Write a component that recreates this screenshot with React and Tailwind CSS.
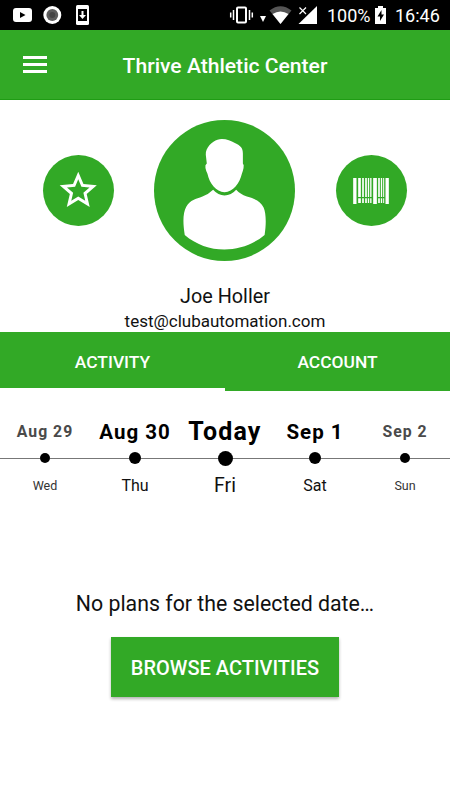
import { clsx } from 'clsx';

const days = [
  { date: 'Aug 29', day: 'Wed', size: 'sm' },
  { date: 'Aug 30', day: 'Thu', size: 'md' },
  { date: 'Today', day: 'Fri', size: 'lg' },
  { date: 'Sep 1', day: 'Sat', size: 'md' },
  { date: 'Sep 2', day: 'Sun', size: 'sm' },
];

const dateStyles = {
  sm: 'text-[15.8px] tracking-[1px] text-[#4a4a4a]',
  md: 'text-[20.5px] tracking-[1px] text-black',
  lg: 'text-[25px] tracking-[1.2px] text-black',
};

const dotStyles = {
  sm: 'size-[10px]',
  md: 'size-[12.5px]',
  lg: 'size-[15px]',
};

const dayStyles = {
  sm: 'text-[12.5px] text-[#333]',
  md: 'text-[16px]',
  lg: 'text-[19.5px]',
};

// x offset, width, height of each barcode stripe
const stripes = [
  [0, 10, 78], [15, 8, 75], [27, 5, 75], [36, 5, 75], [44, 4, 75], [51, 4, 75],
  [60, 11, 78], [75, 5, 75], [83, 4, 75], [90, 3, 75], [97, 10, 78],
];

function StatusBar() {
  return (
    <div className="flex h-[30px] items-center bg-black text-white">
      <svg className="ml-[12px] h-[30px] w-[80px]" viewBox="12 0 80 30">
        <rect x="13" y="8" width="19" height="14" rx="3" fill="#fff" />
        <path d="M20 12l5.5 3-5.5 3z" fill="#000" />
        <circle cx="52.3" cy="15" r="9" fill="#fff" />
        <circle cx="52.3" cy="15" r="5.9" fill="#5c5c5c" />
        <circle cx="52.3" cy="15" r="3" fill="#444" />
        <rect x="76" y="5" width="13" height="20" rx="1.5" fill="#fff" />
        <path d="M78 9h9v12h-9z" fill="#000" />
        <path d="M81.5 11h2v4h2.5l-3.5 4-3.5-4h2.5z" fill="#fff" />
      </svg>
      <svg className="ml-auto h-[30px] w-[92px]" viewBox="228 0 92 30">
        <path d="M230.7 12.5v5M233.5 10v10M249.5 10v10M252.3 12.5v5" stroke="#fff" strokeWidth="1.5" />
        <rect x="237" y="7.5" width="9" height="15" rx="1" fill="none" stroke="#fff" strokeWidth="2" />
        <path d="M260 16h6l-3 6z" fill="#fff" />
        <path d="M269.5 10.5Q280.5 2 291.5 10.5L280.5 24z" fill="#555" />
        <path d="M272.5 14Q280.5 9 288.5 14L280.5 24z" fill="#fff" />
        <path d="M317 6v18h-18.5z" fill="#fff" />
        <path d="M299 7l7 7M306 7l-7 7" stroke="#000" strokeWidth="3" />
        <path d="M299.5 7.5l6.5 6.5M306 7.5l-6.5 6.5" stroke="#fff" strokeWidth="1.2" />
      </svg>
      <span className="ml-[7px] w-[47px] whitespace-nowrap text-[18px]">100%</span>
      <svg className="h-[30px] w-[14px]" viewBox="374 0 14 30">
        <path d="M375 8h3V6h5v2h3v16h-11z" fill="#fff" />
        <path d="M381.5 10l-4 6.5h2.5v4.5l4-6.5h-2.5z" fill="#000" />
      </svg>
      <span className="mr-[10px] ml-[7px] w-[45px] whitespace-nowrap text-[18px]">16:46</span>
    </div>
  );
}

function Header() {
  return (
    <header className="flex h-[70px] items-center border-b border-[#1f9c14] bg-[#32a926] text-white">
      <button className="ml-[23px] flex w-[24px] flex-col gap-[4px]">
        <span className="h-[3px] bg-white" />
        <span className="h-[3px] bg-white" />
        <span className="h-[3px] bg-white" />
      </button>
      <h1 className="mr-[47px] flex-1 pt-[2px] text-center text-[21.1px] font-medium">Thrive Athletic Center</h1>
    </header>
  );
}

function Profile() {
  return (
    <section className="flex h-[232px] flex-col pt-[20px]">
      <div className="flex items-center justify-center gap-[40.5px] pr-px">
        <button className="flex size-[71px] items-center justify-center rounded-full bg-[#32a926]">
          <svg className="size-[44.5px]" viewBox="0 0 24 24" fill="#fff">
            <path d="M22 9.24l-7.19-.62L12 2 9.19 8.63 2 9.24l5.46 4.73L5.82 21 12 17.27 18.18 21l-1.63-7.03L22 9.24zM12 15.4l-3.76 2.27 1-4.28-3.32-2.88 4.38-.38L12 6.1l1.71 4.04 4.38.38-3.32 2.88 1 4.28L12 15.4z" />
          </svg>
        </button>
        <svg className="size-[141px]" viewBox="28 30 422 422">
          <circle cx="239" cy="241" r="211" fill="#32a926" />
          <path
            d="M231 87C246 87 259 93 270 99C288 107 294 115 294 130V160Q298 164 296 174Q294 184 291 191C284 220 265 246 239 246C214 246 194 220 188 191Q184 184 182 174Q180 164 186 160L183 134C182 112 203 93 218 89Q224 87 231 87Z"
            fill="#fff"
          />
          <path
            d="M205 239Q220 256 239 256Q259 256 274 239Q285 252 306 259C334 267 347 274 356 292C364 310 364 342 359 374C290 432 187 432 120 374C115 342 113 310 125 289C137 269 153 267 173 259Q192 252 205 239Z"
            fill="#fff"
          />
        </svg>
        <button className="flex size-[71px] items-center justify-center rounded-full bg-[#32a926]">
          <svg className="h-[26px] w-[36px]" viewBox="0 0 107 78" fill="#fff">
            {stripes.map(([x, w, h]) => (
              <rect key={x} x={x} width={w} height={h} />
            ))}
            <path d="M12 57h46v4h-46zM73 57h22v4h-22z" fill="#32a926" />
          </svg>
        </button>
      </div>
      <p className="mt-[23px] text-center text-[19.8px] leading-[26px]">Joe Holler</p>
      <p className="-mt-px text-center text-[17px] leading-[24px]">test@clubautomation.com</p>
    </section>
  );
}

function Tabs() {
  return (
    <nav className="grid h-[60px] grid-cols-2 text-[17.4px] font-medium text-white">
      <button className="mb-[4px] bg-[#32a926] pt-[5px]">ACTIVITY</button>
      <button className="mb-px bg-[#32a926] pt-[2px]">ACCOUNT</button>
    </nav>
  );
}

function DateStrip() {
  return (
    <section className="grid grid-cols-5 pt-[24px]">
      {days.map(({ date, day, size }) => (
        <div key={date} className="flex flex-col items-center">
          <span className={clsx('flex h-[32px] items-center whitespace-nowrap font-bold', dateStyles[size])}>{date}</span>
          <div className="mt-[2px] flex h-[16px] w-full items-center">
            <span className="h-px flex-1 bg-[#777]" />
            <span className={clsx('rounded-full bg-black', dotStyles[size])} />
            <span className="h-px flex-1 bg-[#777]" />
          </div>
          <span className={clsx('mt-[8px] flex h-[24px] items-center', dayStyles[size])}>{day}</span>
        </div>
      ))}
    </section>
  );
}

export default function App() {
  return (
    <div className="h-[800px] w-[450px] overflow-hidden bg-white font-[Roboto,sans-serif] text-[#111]">
      <StatusBar />
      <Header />
      <Profile />
      <Tabs />
      <DateStrip />
      <section className="flex flex-col items-center pt-[90px]">
        <p className="text-[21.3px] leading-[32px]">No plans for the selected date…</p>
        <button className="mt-[17px] h-[60px] w-[228px] bg-[#32a926] pt-px text-[20px] font-medium text-white shadow-[0_2px_3px_rgba(0,0,0,0.3)]">
          BROWSE ACTIVITIES
        </button>
      </section>
    </div>
  );
}
